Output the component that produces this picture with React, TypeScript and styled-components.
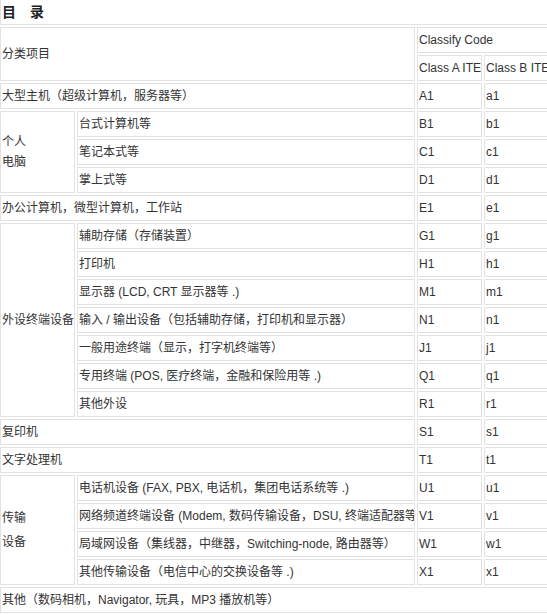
import React from "react";
import styled, { createGlobalStyle } from "styled-components";

const Global = createGlobalStyle`
  html, body { margin: 0; padding: 0; background: #fff; overflow: hidden; }
  body { font-family: "Liberation Sans", Arial, "Noto Sans CJK SC", sans-serif; }
`;

const Table = styled.table`
  border-collapse: separate;
  border-spacing: 2px;
  table-layout: fixed;
  width: 554px;
  margin: -3px 0 0 -2px;
  color: #333;
  font-size: 12px;
`;

const Cell = styled.td<{ $lh?: number }>`
  border: 1px solid #e2e2e2;
  padding: 0 1px;
  height: 24px;
  line-height: ${(p) => (p.$lh ? `${p.$lh}px` : "24px")};
  vertical-align: middle;
  white-space: nowrap;
  overflow: hidden;
  text-align: left;
  font-weight: normal;
`;

const TitleCell = styled(Cell)`
  font-size: 14px;
  font-weight: bold;
  color: #222;
`;

const Line = styled.div`
  display: block;
`;

type Row = { a: string; b: string; text: string };

const peripherals: Row[] = [
  { text: "辅助存储（存储装置）", a: "G1", b: "g1" },
  { text: "打印机", a: "H1", b: "h1" },
  { text: "显示器 (LCD, CRT 显示器等 .)", a: "M1", b: "m1" },
  { text: "输入 / 输出设备（包括辅助存储，打印机和显示器）", a: "N1", b: "n1" },
  { text: "一般用途终端（显示，打字机终端等）", a: "J1", b: "j1" },
  { text: "专用终端 (POS, 医疗终端，金融和保险用等 .)", a: "Q1", b: "q1" },
  { text: "其他外设", a: "R1", b: "r1" },
];

const pcs: Row[] = [
  { text: "台式计算机等", a: "B1", b: "b1" },
  { text: "笔记本式等", a: "C1", b: "c1" },
  { text: "掌上式等", a: "D1", b: "d1" },
];

const trans: Row[] = [
  { text: "电话机设备 (FAX, PBX, 电话机，集团电话系统等 .)", a: "U1", b: "u1" },
  { text: "网络频道终端设备 (Modem, 数码传输设备，DSU, 终端适配器等", a: "V1", b: "v1" },
  { text: "局域网设备（集线器，中继器，Switching-node, 路由器等）", a: "W1", b: "w1" },
  { text: "其他传输设备（电信中心的交换设备等 .)", a: "X1", b: "x1" },
];

function Group({ label, rows, lh }: { label: React.ReactNode; rows: Row[]; lh?: number }) {
  return (
    <>
      {rows.map((r, i) => (
        <tr key={r.a}>
          {i === 0 && (
            <Cell rowSpan={rows.length} $lh={lh}>
              {label}
            </Cell>
          )}
          <Cell>{r.text}</Cell>
          <Cell>{r.a}</Cell>
          <Cell>{r.b}</Cell>
        </tr>
      ))}
    </>
  );
}

function Single({ text, a, b }: Row) {
  return (
    <tr>
      <Cell colSpan={2}>{text}</Cell>
      <Cell>{a}</Cell>
      <Cell>{b}</Cell>
    </tr>
  );
}

export default function App() {
  return (
    <>
      <Global />
      <Table>
        <colgroup>
          <col style={{ width: 75 }} />
          <col style={{ width: 338 }} />
          <col style={{ width: 65 }} />
          <col style={{ width: 66 }} />
        </colgroup>
        <tbody>
          <tr>
            <TitleCell colSpan={4}>目　录</TitleCell>
          </tr>
          <tr>
            <Cell colSpan={2} rowSpan={2}>分类项目</Cell>
            <Cell colSpan={2}>Classify Code</Cell>
          </tr>
          <tr>
            <Cell>Class A ITE</Cell>
            <Cell>Class B ITE</Cell>
          </tr>
          <Single text="大型主机（超级计算机，服务器等）" a="A1" b="a1" />
          <Group
            rows={pcs}
            lh={20}
            label={
              <>
                <Line>个人</Line>
                <Line>电脑</Line>
              </>
            }
          />
          <Single text="办公计算机，微型计算机，工作站" a="E1" b="e1" />
          <Group rows={peripherals} label="外设终端设备" />
          <Single text="复印机" a="S1" b="s1" />
          <Single text="文字处理机" a="T1" b="t1" />
          <Group
            rows={trans}
            lh={24}
            label={
              <>
                <Line>传输</Line>
                <Line>设备</Line>
              </>
            }
          />
          <tr>
            <Cell colSpan={4}>其他（数码相机，Navigator, 玩具，MP3 播放机等）</Cell>
          </tr>
        </tbody>
      </Table>
    </>
  );
}
